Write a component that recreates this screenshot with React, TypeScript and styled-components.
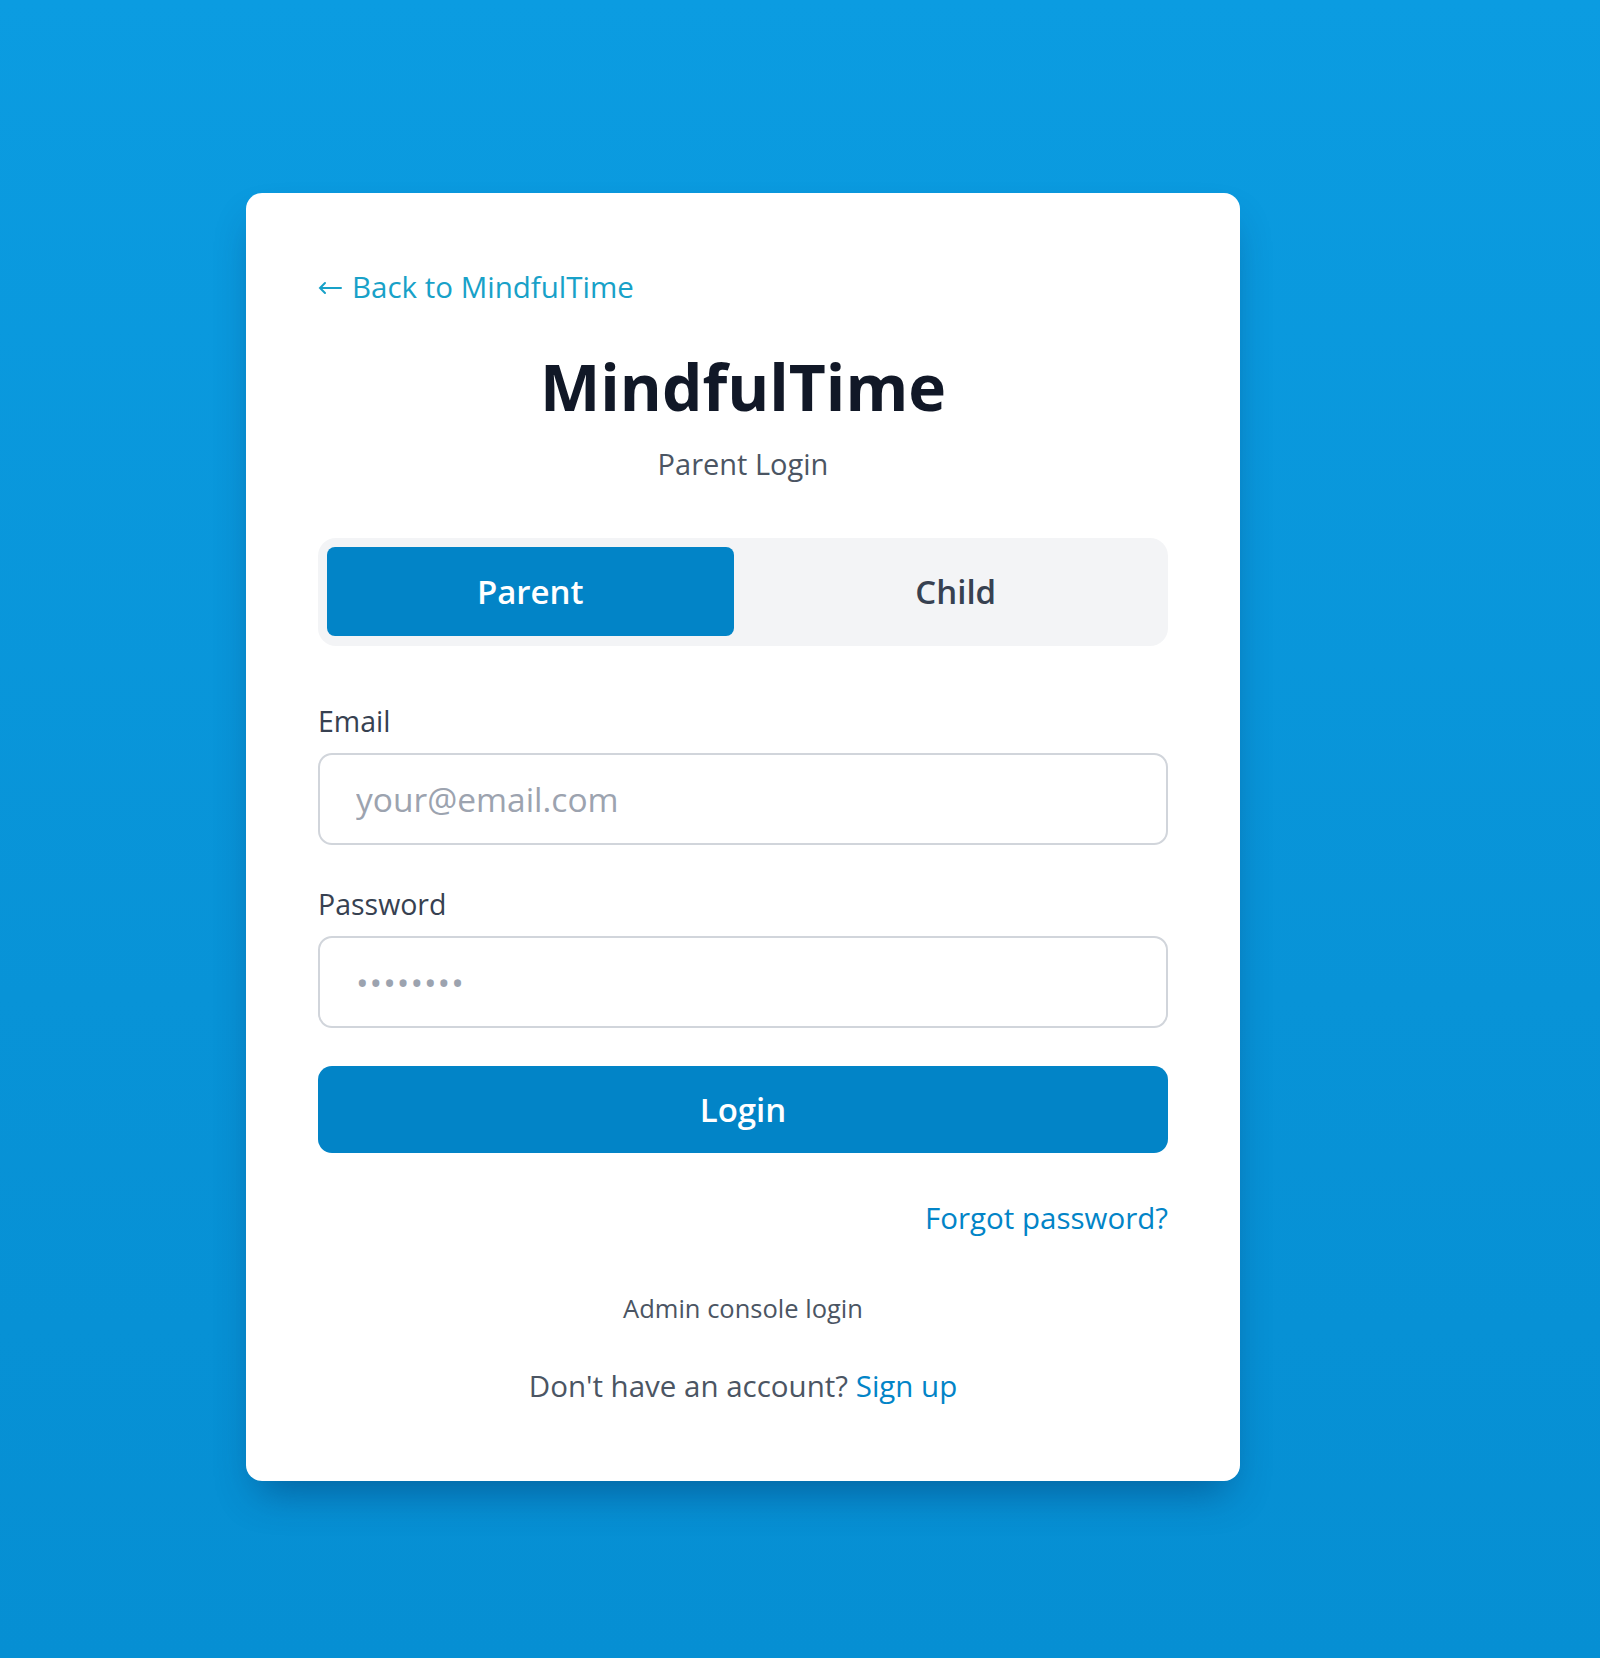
import React, { useState } from 'react';
import styled, { createGlobalStyle } from 'styled-components';

const GlobalStyle = createGlobalStyle`
  html, body {
    margin: 0;
    padding: 0;
  }
  body {
    font-family: "Open Sans", "Noto Sans", Arial, sans-serif;
    background: linear-gradient(180deg, #0b9ce1 0%, #0893d7 60%, #068fd3 100%);
    min-height: 1658px;
  }
  * {
    box-sizing: border-box;
  }
`;

const Page = styled.div`
  min-height: 1658px;
  padding: 193px 0 0 246px;
`;

const Card = styled.div`
  width: 994px;
  background: #ffffff;
  border-radius: 16px;
  padding: 71px 72px 73px;
  box-shadow: 0 22px 40px -12px rgba(0, 40, 90, 0.45);
  display: flex;
  flex-direction: column;
`;

const BackLink = styled.a`
  align-self: flex-start;
  display: inline-flex;
  align-items: center;
  gap: 10px;
  font-size: 29.5px;
  line-height: 45px;
  color: #18a1c8;
  text-decoration: none;
`;

const Arrow = styled.svg`
  width: 24px;
  height: 14px;
  margin-top: 2px;
`;

const Title = styled.h1`
  margin: 37px 0 0;
  text-align: center;
  font-size: 64px;
  line-height: 81px;
  font-weight: 700;
  color: #111827;
`;

const Subtitle = styled.p`
  margin: 14px 0 0;
  text-align: center;
  font-size: 29px;
  line-height: 45px;
  color: #4b5563;
`;

const Tabs = styled.div`
  margin-top: 52px;
  display: grid;
  grid-template-columns: 1fr 1fr;
  gap: 19px;
  padding: 9px 9px 10px;
  background: #f3f4f6;
  border-radius: 18px;
`;

const Tab = styled.button<{ $active?: boolean }>`
  height: 89px;
  border: none;
  border-radius: 8px;
  font-family: inherit;
  font-size: 33px;
  font-weight: 600;
  cursor: pointer;
  background: ${(p) => (p.$active ? '#0284c7' : 'transparent')};
  color: ${(p) => (p.$active ? '#ffffff' : '#374151')};
`;

const Form = styled.form`
  margin-top: 53px;
  display: flex;
  flex-direction: column;
`;

const Field = styled.div`
  display: flex;
  flex-direction: column;
  gap: 9px;
  & + & {
    margin-top: 37px;
  }
`;

const Label = styled.label`
  font-size: 28.5px;
  line-height: 45px;
  font-weight: 500;
  color: #374151;
`;

const Input = styled.input`
  height: 92px;
  width: 100%;
  padding: 0 36px;
  border: 2px solid #d1d5db;
  border-radius: 14px;
  font-family: inherit;
  font-size: 33.5px;
  color: #111827;
  outline: none;
  &::placeholder {
    color: #9ca3af;
  }
  &[type='password']::placeholder {
    letter-spacing: 1px;
  }
`;

const SubmitButton = styled.button`
  margin-top: 38px;
  height: 87px;
  width: 100%;
  border: none;
  border-radius: 14px;
  background: #0284c7;
  color: #ffffff;
  font-family: inherit;
  font-size: 33px;
  font-weight: 600;
  cursor: pointer;
`;

const ForgotRow = styled.div`
  margin-top: 42px;
  display: flex;
  justify-content: flex-end;
`;

const TextLink = styled.a<{ $weight?: number }>`
  font-size: 29.5px;
  line-height: 45px;
  color: #0284c7;
  font-weight: ${(p) => p.$weight ?? 400};
  text-decoration: none;
`;

const AdminLink = styled.a`
  margin-top: 50px;
  align-self: center;
  font-size: 25.5px;
  line-height: 36px;
  color: #4b5563;
  text-decoration: none;
`;

const Footer = styled.p`
  margin: 37px 0 0;
  text-align: center;
  font-size: 29.5px;
  line-height: 45px;
  color: #4b5563;
`;

export default function App() {
  const [role, setRole] = useState<'parent' | 'child'>('parent');
  return (
    <>
      <GlobalStyle />
      <Page>
        <Card>
          <BackLink href="#">
            <Arrow viewBox="0 0 24 14" fill="none" stroke="currentColor" strokeWidth="2" strokeLinecap="round">
              <path d="M23 7H2M7 2L2 7L7 12" />
            </Arrow>
            Back to MindfulTime
          </BackLink>
          <Title>MindfulTime</Title>
          <Subtitle>{role === 'parent' ? 'Parent Login' : 'Child Login'}</Subtitle>
          <Tabs>
            <Tab $active={role === 'parent'} onClick={() => setRole('parent')}>
              Parent
            </Tab>
            <Tab $active={role === 'child'} onClick={() => setRole('child')}>
              Child
            </Tab>
          </Tabs>
          <Form onSubmit={(e) => e.preventDefault()}>
            <Field>
              <Label htmlFor="email">Email</Label>
              <Input id="email" type="email" placeholder="your@email.com" />
            </Field>
            <Field>
              <Label htmlFor="password">Password</Label>
              <Input id="password" type="password" placeholder="••••••••" />
            </Field>
            <SubmitButton type="submit">Login</SubmitButton>
          </Form>
          <ForgotRow>
            <TextLink href="#">Forgot password?</TextLink>
          </ForgotRow>
          <AdminLink href="#">Admin console login</AdminLink>
          <Footer>
            Don't have an account? <TextLink href="#" $weight={500}>Sign up</TextLink>
          </Footer>
        </Card>
      </Page>
    </>
  );
}
